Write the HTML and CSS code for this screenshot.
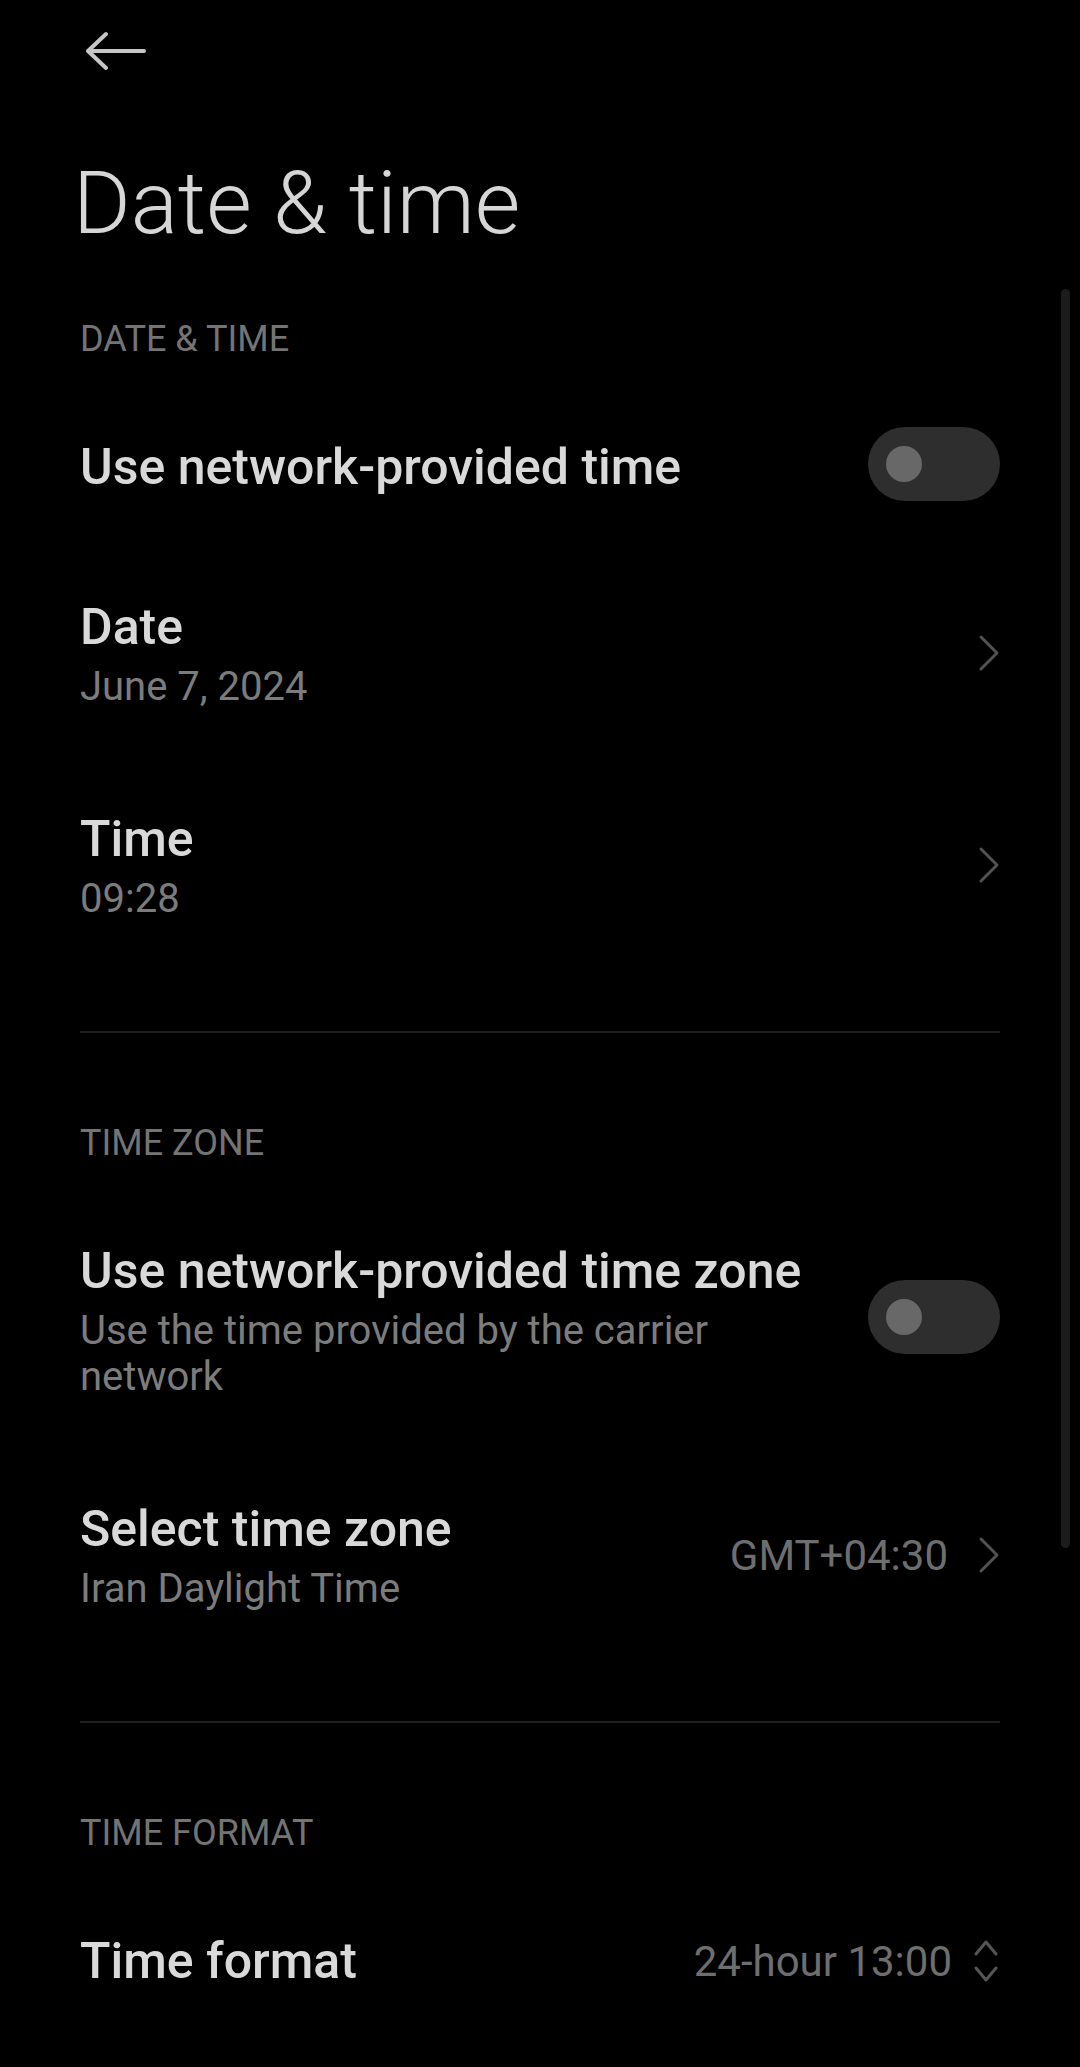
FILE: index.html
```html
<!DOCTYPE html>
<html lang="en">
<head>
<meta charset="utf-8">
<title>Date &amp; time</title>
<link rel="stylesheet" href="styles.css">
</head>
<body>
<div class="screen">
  <header class="appbar">
    <button class="back" aria-label="Back">
      <svg width="60" height="40" viewBox="0 0 60 40" fill="none" stroke="currentColor" stroke-width="4" stroke-linecap="round" stroke-linejoin="round"><path d="M20 3 L2 20 L20 37 M2 20 H58"/></svg>
    </button>
  </header>

  <h1 class="page-title">Date &amp; time</h1>

  <section class="group">
    <div class="group-label">DATE &amp; TIME</div>
    <div class="row row-single">
      <div class="row-text"><div class="row-title">Use network-provided time</div></div>
      <span class="switch"><span class="knob"></span></span>
    </div>
    <div class="row">
      <div class="row-text">
        <div class="row-title">Date</div>
        <div class="row-sub">June 7, 2024</div>
      </div>
      <svg class="chev" width="22" height="38" viewBox="0 0 22 38" fill="none" stroke="currentColor" stroke-width="3" stroke-linecap="round" stroke-linejoin="round"><path d="M3 3 L19 19 L3 35"/></svg>
    </div>
    <div class="row">
      <div class="row-text">
        <div class="row-title">Time</div>
        <div class="row-sub">09:28</div>
      </div>
      <svg class="chev" width="22" height="38" viewBox="0 0 22 38" fill="none" stroke="currentColor" stroke-width="3" stroke-linecap="round" stroke-linejoin="round"><path d="M3 3 L19 19 L3 35"/></svg>
    </div>
  </section>

  <div class="divider"></div>

  <section class="group">
    <div class="group-label">TIME ZONE</div>
    <div class="row">
      <div class="row-text">
        <div class="row-title">Use network-provided time zone</div>
        <div class="row-sub">Use the time provided by the carrier network</div>
      </div>
      <span class="switch"><span class="knob"></span></span>
    </div>
    <div class="row">
      <div class="row-text">
        <div class="row-title">Select time zone</div>
        <div class="row-sub">Iran Daylight Time</div>
      </div>
      <div class="row-end">
        <span class="value">GMT+04:30</span>
        <svg class="chev" width="22" height="38" viewBox="0 0 22 38" fill="none" stroke="currentColor" stroke-width="3" stroke-linecap="round" stroke-linejoin="round"><path d="M3 3 L19 19 L3 35"/></svg>
      </div>
    </div>
  </section>

  <div class="divider"></div>

  <section class="group">
    <div class="group-label">TIME FORMAT</div>
    <div class="row row-single">
      <div class="row-text"><div class="row-title">Time format</div></div>
      <div class="row-end row-end-tight">
        <span class="value">24-hour 13:00</span>
        <svg class="updown" width="28" height="46" viewBox="0 0 28 46" fill="none" stroke="currentColor" stroke-width="3" stroke-linecap="round" stroke-linejoin="round"><path d="M4 16 L14 4 L24 16 M4 30 L14 42 L24 30"/></svg>
      </div>
    </div>
  </section>

  <div class="scrollbar"></div>
</div>
</body>
</html>
```

FILE: styles.css
```css
html, body {
  margin: 0;
  padding: 0;
  background: #000;
}

body {
  font-family: Roboto, "Noto Sans", "Liberation Sans", sans-serif;
  color: #d8d8d8;
}

.screen {
  position: relative;
  width: 1080px;
  min-height: 2067px;
  box-sizing: border-box;
  padding: 0 80px;
  overflow: hidden;
}

.appbar {
  height: 102px;
  display: flex;
  align-items: center;
}

.back {
  background: none;
  border: 0;
  padding: 0;
  margin-left: 6px;
  color: #c6c6c6;
  display: flex;
}

.page-title {
  margin: 51px 0 0 -7px;
  font-size: 88px;
  font-weight: 300;
  line-height: 100px;
  color: #d6d6d6;
}

.group-label {
  font-size: 36px;
  line-height: 40px;
  color: #747474;
  margin-bottom: 28px;
}

.page-title + .group .group-label {
  margin-top: 66px;
}

.row {
  display: flex;
  align-items: center;
  justify-content: space-between;
  gap: 48px;
  box-sizing: border-box;
  min-height: 212px;
  padding: 49px 0;
}

.row-single {
  min-height: 160px;
  padding: 0;
}

.row-text {
  flex: 1;
  min-width: 0;
}

.row-title {
  font-size: 50px;
  font-weight: 500;
  line-height: 62px;
  color: #d9d9d9;
}

.row-sub {
  margin-top: 6px;
  font-size: 40px;
  line-height: 46px;
  color: #7c7c7c;
}

.row-end {
  display: flex;
  align-items: center;
  gap: 30px;
}

.row-end-tight {
  gap: 20px;
}

.value {
  font-size: 42px;
  color: #6e6e6e;
}

.chev {
  color: #525252;
  flex: none;
}

.updown {
  color: #555;
  flex: none;
}

.switch {
  flex: none;
  width: 132px;
  height: 74px;
  margin-bottom: 6px;
  box-sizing: border-box;
  border-radius: 37px;
  background: #2e2e2e;
  display: flex;
  align-items: center;
  padding-left: 18px;
}

.knob {
  width: 36px;
  height: 36px;
  border-radius: 50%;
  background: #686868;
}

.divider {
  height: 2px;
  background: #1f1f1f;
  margin: 60px 0 90px;
}

.scrollbar {
  position: absolute;
  left: 1061px;
  top: 289px;
  width: 9px;
  height: 1259px;
  border-radius: 5px;
  background: #1c1c1c;
}
```
